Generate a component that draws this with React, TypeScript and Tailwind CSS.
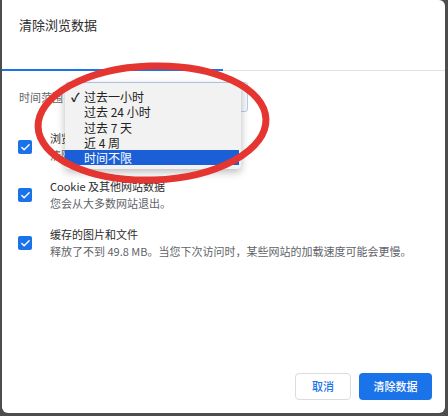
import { Check } from 'lucide-react'

const FONT = { fontFamily: '"Noto Sans CJK SC", "Liberation Sans", sans-serif' }

const RANGES = ['过去一小时', '过去 24 小时', '过去 7 天', '近 4 周', '时间不限']

const ITEMS = [
  { title: '浏览记录', sub: '清除所有已登录设备中的历史记录。' },
  { title: 'Cookie 及其他网站数据', sub: '您会从大多数网站退出。' },
  { title: '缓存的图片和文件', sub: '释放了不到 49.8 MB。当您下次访问时，某些网站的加载速度可能会更慢。' },
]

function Checkbox() {
  return (
    <div className="w-[14px] h-[14px] shrink-0 rounded-[2px] bg-[#1a73e8] flex items-center justify-center">
      <Check size={11} strokeWidth={3} color="white" />
    </div>
  )
}

export default function App() {
  return (
    <div className="relative w-[448px] h-[416px] bg-[#4d4d4d] overflow-hidden" style={FONT}>
      <div className="ml-[2px] mr-[3px] h-[413px] bg-white rounded-b-[6px] rounded-tr-[6px] flex flex-col">
        <div className="h-[68px] pt-[16px] px-[17px] text-[13px] leading-[17px] text-[#2b2b2b]">清除浏览数据</div>

        <div className="flex items-end h-[3px]">
          <div className="w-[221px] h-[2px] bg-[#1a73e8]" />
          <div className="flex-1 h-px bg-[#e3e3e3]" />
        </div>

        <div className="pt-[11px] px-[16px]">
          <div className="flex items-center h-[30px]">
            <span className="w-[47px] pl-px text-[11px] text-[#5f6368]">时间范围</span>
            <div className="w-[183px] h-[30px] rounded-[3px] border border-[#b7cdf0] bg-[#f7f9fc]" />
          </div>

          <div className="mt-[18px] flex flex-col gap-[14px]">
            {ITEMS.map((it) => (
              <div key={it.title} className="flex items-center gap-[18px]">
                <Checkbox />
                <div className="text-[11px] leading-[17px]">
                  <div className="text-[#2b2b2b]">{it.title}</div>
                  <div className="text-[#5f6368]">{it.sub}</div>
                </div>
              </div>
            ))}
          </div>
        </div>

        <div className="mt-auto flex justify-end gap-[8px] pr-[13px] pb-[13px]">
          <button className="w-[56px] h-[27px] rounded-[4px] border border-[#dadce0] bg-white text-[11px] font-medium text-[#1a73e8]">
            取消
          </button>
          <button className="w-[73px] h-[27px] rounded-[4px] bg-[#1a73e8] text-[11px] font-medium text-white">
            清除数据
          </button>
        </div>
      </div>

      {/* open select menu */}
      <div className="absolute left-[65px] top-[83px] w-[176px] pt-[6px] pb-[4px] bg-[#f2f2f2] rounded-[4px] shadow-[0_3px_8px_rgba(0,0,0,0.28)] text-[12px] leading-[15.3px] text-[#222]">
        {RANGES.map((r, i) => (
          <div
            key={r}
            className={
              i === RANGES.length - 1
                ? 'relative pl-[19px] mr-[2px] bg-[#1a5fd8] text-white'
                : 'relative pl-[19px]'
            }
          >
            {i === 0 && <span className="absolute left-[6px] top-0 text-[12px] font-bold">✓</span>}
            {r}
          </div>
        ))}
      </div>

      {/* annotation */}
      <svg className="absolute left-0 top-0 pointer-events-none" width="448" height="416">
        <ellipse cx="152" cy="123" rx="114" ry="57" fill="none" stroke="#e53530" strokeWidth="7" transform="rotate(-2 152 123)" />
      </svg>
    </div>
  )
}
